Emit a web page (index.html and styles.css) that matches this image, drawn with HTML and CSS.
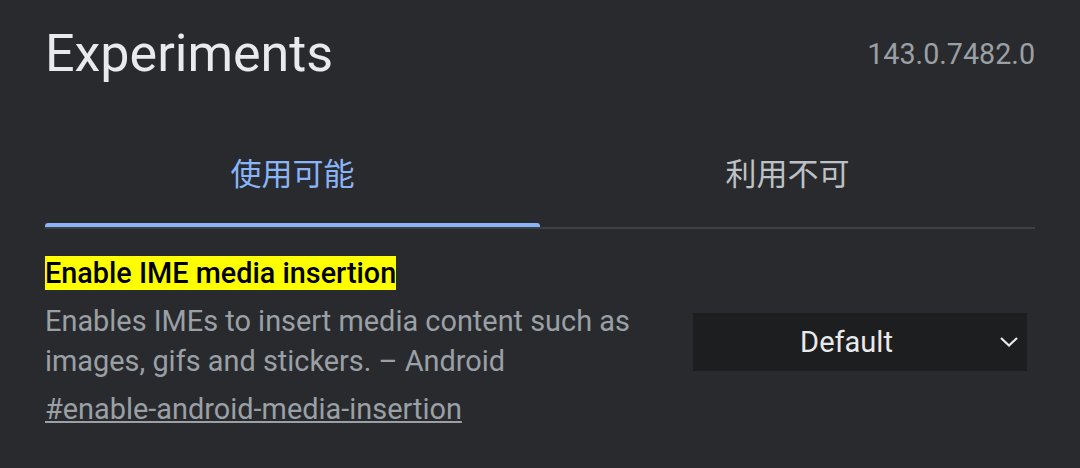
FILE: index.html
```html
<!DOCTYPE html>
<html lang="ja">
<head>
<meta charset="utf-8">
<title>Experiments</title>
<link rel="stylesheet" href="styles.css">
</head>
<body>
<div class="page">
  <header class="header">
    <h1 class="title">Experiments</h1>
    <div class="version">143.0.7482.0</div>
  </header>
  <div class="tabs">
    <div class="tab active">使用可能</div>
    <div class="tab">利用不可</div>
  </div>
  <div class="experiment">
    <div class="exp-text">
      <h2 class="exp-name"><mark class="match">Enable IME media insertion</mark></h2>
      <p class="exp-desc">Enables IMEs to insert media content such as images, gifs and stickers. – Android</p>
      <a class="exp-link" href="#enable-android-media-insertion">#enable-android-media-insertion</a>
    </div>
    <div class="exp-actions">
      <div class="select">
        <span class="select-value">Default</span>
        <svg class="chevron" width="18" height="10" viewBox="0 0 18 10"><path d="M1 1 L9 8.5 L17 1" fill="none" stroke="#e8eaed" stroke-width="2.2"/></svg>
      </div>
    </div>
  </div>
</div>
</body>
</html>
```

FILE: styles.css
```css
html, body {
  margin: 0;
  padding: 0;
  background: #292a2d;
}
body {
  font-family: Roboto, "Noto Sans CJK JP", sans-serif;
  color: #e8eaed;
}
.page {
  padding: 0 45px;
}
.header {
  display: flex;
  justify-content: space-between;
  align-items: center;
  padding-top: 22px;
}
.title {
  margin: 0;
  font-size: 52px;
  font-weight: 400;
  line-height: 64px;
  color: #e8eaed;
}
.version {
  font-size: 28.7px;
  color: #9aa0a6;
  line-height: 30px;
}
.tabs {
  margin-top: 42px;
  display: grid;
  grid-template-columns: 1fr 1fr;
  border-bottom: 2px solid #3c4043;
}
.tab {
  position: relative;
  height: 99px;
  line-height: 94px;
  text-align: center;
  font-family: Roboto, "Noto Sans CJK JP", sans-serif;
  font-size: 31px;
  color: #bdc1c6;
}
.tab.active {
  color: #8ab4f8;
}
.tab.active::after {
  content: "";
  position: absolute;
  left: 0;
  right: 0;
  bottom: 0;
  height: 4px;
  background: #8ab4f8;
  border-radius: 3px 3px 0 0;
}
.experiment {
  display: flex;
  align-items: center;
  padding-top: 27px;
}
.exp-text {
  flex: 1;
  min-width: 0;
  padding-bottom: 2px;
}
.exp-name {
  margin: 0;
  font-size: 28.8px;
  font-weight: 500;
  line-height: 34px;
}
.match {
  background: #ffff00;
  color: #000;
}
.exp-desc {
  margin: 11px 0 0;
  font-size: 28.9px;
  line-height: 40px;
  color: #9aa0a6;
}
.exp-link {
  display: inline-block;
  margin-top: 11px;
  font-size: 28.9px;
  line-height: 34px;
  color: #9aa0a6;
  text-decoration: underline;
}
.exp-actions {
  flex: 0 0 auto;
  margin-left: 43px;
  margin-right: 8px;
}
.select {
  width: 334px;
  height: 58px;
  box-sizing: border-box;
  display: flex;
  align-items: center;
  background: #1d1e20;
  padding-right: 9px;
}
.select-value {
  flex: 1;
  text-align: center;
  font-size: 29px;
  color: #e8eaed;
}
.chevron {
  display: block;
  flex: 0 0 auto;
}
```
